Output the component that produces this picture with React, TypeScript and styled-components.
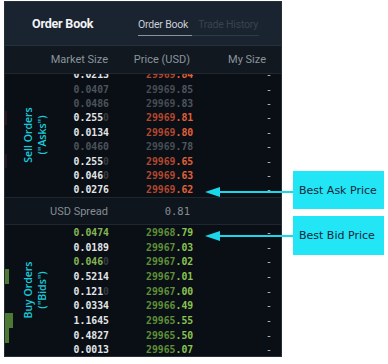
import React from 'react';
import styled, { createGlobalStyle } from 'styled-components';

const Global = createGlobalStyle`
  html, body { margin: 0; padding: 0; background: #ffffff; }
  body { width: 388px; height: 364px; overflow: hidden; font-family: Roboto, "Liberation Sans", sans-serif; }
`;

const Stage = styled.div`
  position: relative;
  width: 388px;
  height: 364px;
  padding: 1px 0 0 4px;
  box-sizing: border-box;
`;

const Panel = styled.div`
  position: relative;
  width: 278px;
  height: 356px;
  box-sizing: border-box;
  border: 1px solid #262e36;
  background: #0a0f15;
  display: flex;
  flex-direction: column;
  overflow: hidden;
`;

const Header = styled.header`
  flex: none;
  height: 43px;
  background: #1a2330;
  border-bottom: 1px solid #26303b;
  display: grid;
  grid-template-columns: 106px auto;
  align-items: center;
  padding-left: 27px;
`;

const Title = styled.h1`
  margin: 0;
  font-size: 12.5px;
  font-weight: 700;
  color: #f2f4f6;
  letter-spacing: -0.2px;
`;

const Tabs = styled.div`
  display: flex;
  align-items: flex-end;
  height: 20px;
  margin-top: 4px;
`;

const Tab = styled.div<{ $active?: boolean }>`
  font-size: 10.5px;
  letter-spacing: -0.2px;
  padding: ${p => (p.$active ? '0 4px 4px 0' : '0 1px 4px 6px')};
  color: ${p => (p.$active ? '#c9ced3' : '#38434e')};
  border-bottom: 1px solid ${p => (p.$active ? '#8a939c' : '#2f3a46')};
`;

const ColHead = styled.div`
  flex: none;
  height: 27px;
  background: #111820;
  border-bottom: 1px solid #1f2831;
  display: grid;
  grid-template-columns: 103px 82px 1fr;
  align-items: center;
  padding-right: 15px;
  font-size: 11px;
  color: #8b949c;
  & > span { text-align: right; }
`;

const Book = styled.div<{ $h: number; $end?: boolean }>`
  flex: none;
  height: ${p => p.$h}px;
  overflow: hidden;
  display: flex;
  flex-direction: column;
  justify-content: ${p => (p.$end ? 'flex-end' : 'flex-start')};
`;

const Row = styled.div<{ $h: number }>`
  flex: none;
  height: ${p => p.$h}px;
  display: grid;
  grid-template-columns: 68px 36px 37px 1fr auto;
  align-items: center;
  padding-right: 9px;
  font-family: "DejaVu Sans Mono", "Liberation Mono", monospace;
  font-size: 9.8px;
  font-weight: 700;
`;

const Depth = styled.div<{ $side: 'ask' | 'bid' }>`
  align-self: stretch;
  background: ${p => (p.$side === 'bid' ? '#4c7a35' : '#2a151a')};
`;

const Size = styled.span<{ $tone: 'bright' | 'dim' | 'green' }>`
  text-align: right;
  color: ${p => (p.$tone === 'bright' ? '#e3e6e9' : p.$tone === 'green' ? '#86b653' : '#4c535a')};
`;

const Faded = styled.span`
  color: #353b42;
`;

const Price = styled.span`
  white-space: nowrap;
`;

const PriceInt = styled.span<{ $c: string }>`
  color: ${p => p.$c};
`;

const Dash = styled.span`
  color: #c4c8cc;
  font-weight: 400;
`;

const Spread = styled.div`
  flex: none;
  height: 26px;
  background: #0e151c;
  border-top: 1px solid #1f2831;
  border-bottom: 1px solid #1f2831;
  display: grid;
  grid-template-columns: 103px 82px 1fr;
  align-items: center;
  color: #858e96;
  & > span { text-align: right; }
`;

const SpreadLabel = styled.span`
  font-size: 11px;
`;

const SpreadValue = styled.span`
  font-family: "DejaVu Sans Mono", "Liberation Mono", monospace;
  font-size: 10.5px;
`;

const SideLabel = styled.div<{ $top: number }>`
  position: absolute;
  left: 30px;
  top: ${p => p.$top}px;
  transform: translate(-50%, -50%) rotate(-90deg);
  white-space: nowrap;
  text-align: center;
  font-family: "Open Sans", "DejaVu Sans", sans-serif;
  font-weight: 600;
  font-size: 10.5px;
  line-height: 13.5px;
  color: #17cbdc;
`;

const Callout = styled.div<{ $top: number; $h: number }>`
  position: absolute;
  left: 293px;
  top: ${p => p.$top}px;
  width: 91px;
  height: ${p => p.$h}px;
  box-sizing: border-box;
  padding-left: 6px;
  background: #22e5f5;
  display: flex;
  align-items: center;
  font-family: "DejaVu Sans", sans-serif;
  font-size: 11px;
  letter-spacing: 0px;
  color: #16263a;
`;

const ArrowSvg = styled.svg<{ $top: number }>`
  position: absolute;
  left: 204px;
  top: ${p => p.$top}px;
`;

type Tone = 'bright' | 'dim' | 'green';
type Entry = { size: string; fade?: string; tone: Tone; int: string; dec: string; dim?: boolean; depth: number };

const asks: Entry[] = [
  { size: '0.0213', tone: 'bright', int: '29969', dec: '.84', depth: 0 },
  { size: '0.0407', tone: 'dim', int: '29969', dec: '.85', dim: true, depth: 0 },
  { size: '0.0486', tone: 'dim', int: '29969', dec: '.83', dim: true, depth: 0 },
  { size: '0.255', fade: '0', tone: 'bright', int: '29969', dec: '.81', depth: 2 },
  { size: '0.0134', tone: 'bright', int: '29969', dec: '.80', depth: 0 },
  { size: '0.0460', tone: 'dim', int: '29969', dec: '.78', dim: true, depth: 0 },
  { size: '0.255', fade: '0', tone: 'bright', int: '29969', dec: '.65', depth: 2 },
  { size: '0.046', fade: '0', tone: 'bright', int: '29969', dec: '.63', depth: 0 },
  { size: '0.0276', tone: 'bright', int: '29969', dec: '.62', depth: 0 },
];

const bids: Entry[] = [
  { size: '0.0474', tone: 'green', int: '29968', dec: '.79', depth: 0 },
  { size: '0.0189', tone: 'bright', int: '29967', dec: '.03', depth: 0 },
  { size: '0.046', fade: '0', tone: 'green', int: '29967', dec: '.02', depth: 0 },
  { size: '0.5214', tone: 'bright', int: '29967', dec: '.01', depth: 4 },
  { size: '0.121', fade: '0', tone: 'bright', int: '29967', dec: '.00', depth: 0 },
  { size: '0.0334', tone: 'bright', int: '29966', dec: '.49', depth: 0 },
  { size: '1.1645', tone: 'bright', int: '29965', dec: '.55', depth: 8 },
  { size: '0.4827', tone: 'bright', int: '29965', dec: '.50', depth: 4 },
  { size: '0.0013', tone: 'bright', int: '29965', dec: '.07', depth: 0 },
];

const colors = {
  ask: { int: '#b4472f', dec: '#e4613a' },
  bid: { int: '#5f9038', dec: '#8cc451' },
  dim: { int: '#464d54', dec: '#50575e' },
};

function BookRow({ e, side, h }: { e: Entry; side: 'ask' | 'bid'; h: number }) {
  const c = e.dim ? colors.dim : colors[side];
  return (
    <Row $h={h}>
      <Depth $side={side} style={{ width: e.depth }} />
      <Size $tone={e.tone}>
        {e.size}
        {e.fade && <Faded>{e.fade}</Faded>}
      </Size>
      <span />
      <Price>
        <PriceInt $c={c.int}>{e.int}</PriceInt>
        <PriceInt $c={c.dec}>{e.dec}</PriceInt>
      </Price>
      <Dash>-</Dash>
    </Row>
  );
}

function Arrow({ top }: { top: number }) {
  return (
    <ArrowSvg $top={top} width="90" height="12" viewBox="0 0 90 12">
      <polygon points="1,6 16,1 16,11" fill="#1ad8ea" />
      <rect x="15" y="5" width="75" height="2" fill="#1ad8ea" />
    </ArrowSvg>
  );
}

export default function App() {
  return (
    <>
      <Global />
      <Stage>
        <Panel>
          <Header>
            <Title>Order Book</Title>
            <Tabs>
              <Tab $active>Order Book</Tab>
              <Tab>Trade History</Tab>
            </Tabs>
          </Header>
          <ColHead>
            <span>Market Size</span>
            <span>Price (USD)</span>
            <span>My Size</span>
          </ColHead>
          <Book $h={123} $end>
            {asks.map((e, i) => (
              <BookRow key={i} e={e} side="ask" h={14.4} />
            ))}
          </Book>
          <Spread>
            <SpreadLabel>USD Spread</SpreadLabel>
            <SpreadValue>0.81</SpreadValue>
          </Spread>
          <Book $h={140}>
            {bids.map((e, i) => (
              <BookRow key={i} e={e} side="bid" h={14.7} />
            ))}
          </Book>
          <SideLabel $top={133}>
            Sell Orders
            <br />
            ("Asks")
          </SideLabel>
          <SideLabel $top={288}>
            Buy Orders
            <br />
            ("Bids")
          </SideLabel>
        </Panel>
        <Arrow top={186} />
        <Arrow top={230} />
        <Callout $top={171} $h={38}>Best Ask Price</Callout>
        <Callout $top={216} $h={39}>Best Bid Price</Callout>
      </Stage>
    </>
  );
}
